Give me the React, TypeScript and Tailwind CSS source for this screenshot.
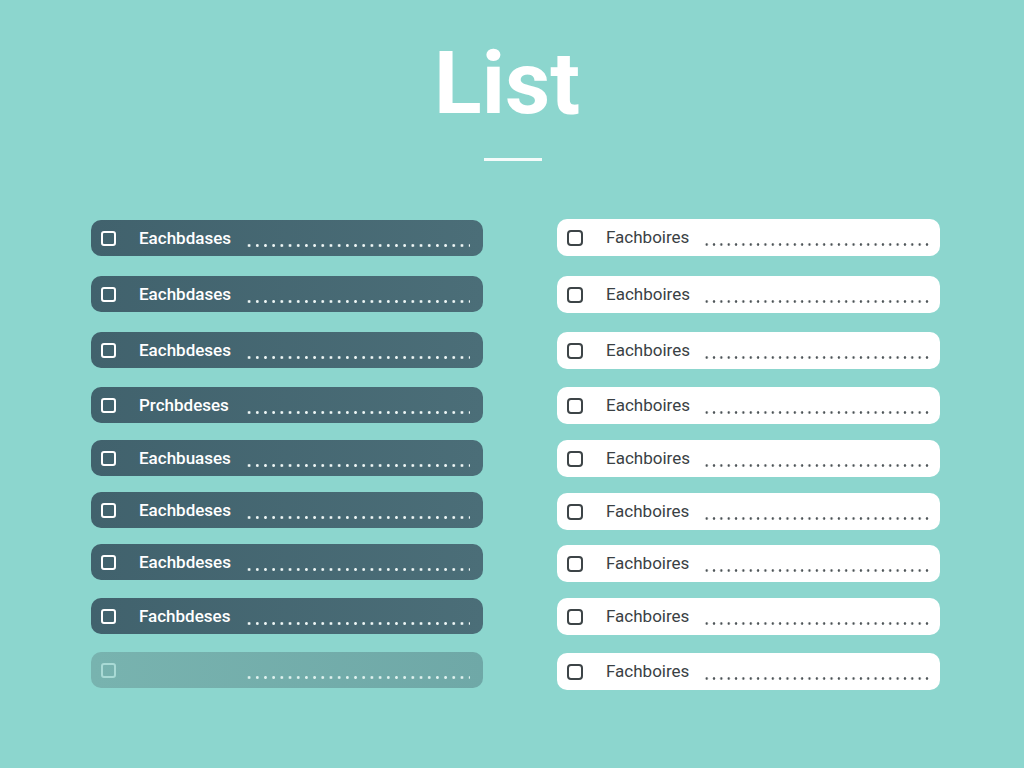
import React from "react";

const leftItems = [
  "Eachbdases",
  "Eachbdases",
  "Eachbdeses",
  "Prchbdeses",
  "Eachbuases",
  "Eachbdeses",
  "Eachbdeses",
  "Fachbdeses",
];

const rightItems = [
  "Fachboires",
  "Eachboires",
  "Eachboires",
  "Eachboires",
  "Eachboires",
  "Fachboires",
  "Fachboires",
  "Fachboires",
  "Fachboires",
];

const leftGaps = ["mt-0", "mt-[20px]", "mt-[20px]", "mt-[19px]", "mt-[17px]", "mt-[16px]", "mt-[16px]", "mt-[18px]", "mt-[18px]"];
const rightGaps = ["mt-0", "mt-[20px]", "mt-[19px]", "mt-[18px]", "mt-[16px]", "mt-[16px]", "mt-[15px]", "mt-[16px]", "mt-[18px]"];

function DarkRow({ label, gap }: { label: string; gap: string }) {
  return (
    <div className={`${gap} flex h-9 items-center rounded-[10px] bg-gradient-to-r from-[#41626d] to-[#4b6e78] pl-[10px] pr-[13px]`}>
      <span className="h-[15px] w-[15px] shrink-0 rounded-[3px] border-2 border-white" />
      <span className="ml-[23px] w-[106px] shrink-0 text-[17px] font-medium leading-none text-white">{label}</span>
      <span className="mt-[14px] h-[3px] flex-1 bg-[radial-gradient(circle,#eef6f5_1.1px,transparent_1.7px)] bg-[length:8.2px_3px]" />
    </div>
  );
}

function FadedRow({ gap }: { gap: string }) {
  return (
    <div className={`${gap} flex h-9 items-center rounded-[10px] bg-gradient-to-r from-[#78b3af] to-[#6fa8a7] pl-[10px] pr-[13px]`}>
      <span className="h-[15px] w-[15px] shrink-0 rounded-[3px] border-2 border-[#a9dad5]" />
      <span className="ml-[23px] w-[106px] shrink-0" />
      <span className="mt-[14px] h-[3px] flex-1 bg-[radial-gradient(circle,#dff1ee_1.1px,transparent_1.7px)] bg-[length:8.2px_3px]" />
    </div>
  );
}

function LightRow({ label, gap }: { label: string; gap: string }) {
  return (
    <div className={`${gap} flex h-[37px] items-center rounded-[10px] bg-white pl-[10px] pr-[10px]`}>
      <span className="h-[16px] w-[16px] shrink-0 rounded-[4px] border-2 border-[#3d4447]" />
      <span className="ml-[23px] w-[97px] shrink-0 text-[17px] leading-none text-[#3a4144]">{label}</span>
      <span className="mt-[14px] h-[3px] flex-1 bg-[radial-gradient(circle,#4a5154_0.95px,transparent_1.5px)] bg-[length:7.35px_3px]" />
    </div>
  );
}

export default function App() {
  return (
    <div
      className="h-[768px] w-[1024px] overflow-hidden bg-[#8cd6ce]"
      style={{ fontFamily: "Roboto, 'Liberation Sans', sans-serif" }}
    >
      <div className="flex flex-col items-center pt-[39px]">
        <h1 className="ml-[-10px] text-[88px] font-bold leading-[88px] text-white">List</h1>
        <div className="ml-[2px] mt-[31px] h-[3px] w-[58px] bg-[#f4fbfa]" />
      </div>
      <div className="mt-[58px] grid grid-cols-[392px_383px] items-start gap-x-[74px] pl-[91px]">
        <div className="flex flex-col pt-px">
          {leftItems.map((l, i) => (
            <DarkRow key={i} label={l} gap={leftGaps[i]} />
          ))}
          <FadedRow gap={leftGaps[8]} />
        </div>
        <div className="flex flex-col">
          {rightItems.map((l, i) => (
            <LightRow key={i} label={l} gap={rightGaps[i]} />
          ))}
        </div>
      </div>
    </div>
  );
}
